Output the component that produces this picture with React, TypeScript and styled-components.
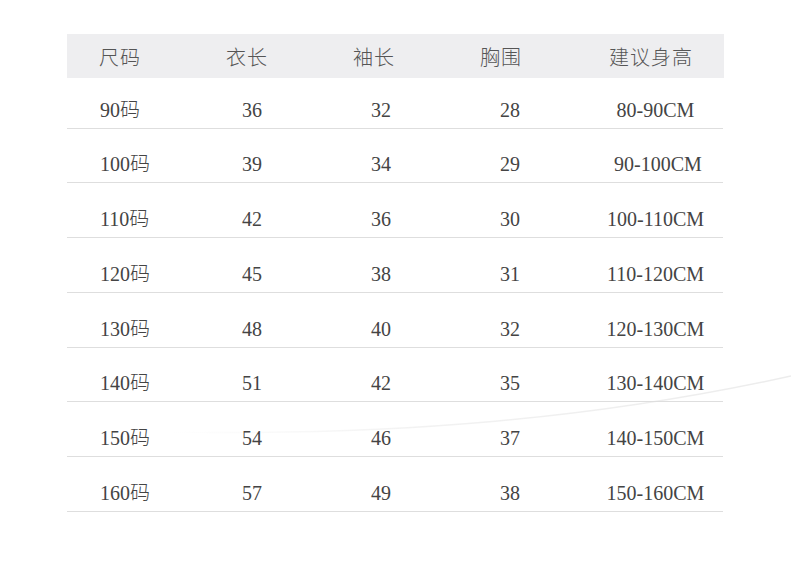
import styled, { createGlobalStyle } from "styled-components";

const GlobalStyle = createGlobalStyle`
  html, body {
    margin: 0;
    padding: 0;
    background: #ffffff;
  }
  body {
    font-family: "Liberation Serif", "Noto Sans CJK SC", serif;
    color: #444;
  }
`

const Page = styled.div`
  position: relative;
  width: 791px;
  height: 572px;
  overflow: hidden;
  padding: 34px 0 0 67px;
  box-sizing: border-box;
`

const Swoosh = styled.svg`
  position: absolute;
  left: 0;
  top: 0;
  pointer-events: none;
`

const Table = styled.div`
  position: relative;
  width: 657px;
`

const cols = "116px 128px 126px 128px 159px";

const HeadRow = styled.div`
  display: grid;
  grid-template-columns: ${cols};
  height: 44px;
  align-items: center;
  background: #eeeef0;
`

const HeadCell = styled.div<{ left?: boolean; shift?: number }>`
  font-family: "Noto Sans CJK SC", sans-serif;
  font-weight: 300;
  font-size: 20px;
  line-height: 22px;
  color: #555;
  text-align: ${p => (p.left ? "left" : "center")};
  padding-left: ${p => p.shift ?? 0}px;
  padding-top: 1px;
  letter-spacing: 1px;
`

const Row = styled.div<{ h: number }>`
  display: grid;
  grid-template-columns: ${cols};
  height: ${p => p.h}px;
  box-sizing: border-box;
  align-items: end;
  padding-bottom: 7px;
  border-bottom: 1px solid #dedede;
  width: 656px;
`

const Cell = styled.div<{ left?: boolean; shift?: number }>`
  font-size: 20px;
  line-height: 22px;
  color: #444;
  white-space: pre;
  text-align: ${p => (p.left ? "left" : "center")};
  padding-left: ${p => p.shift ?? 0}px;
`

const Size = styled.span`
  font-family: "Noto Sans CJK SC", sans-serif;
  font-weight: 300;
`

const heads = ["尺码", "衣长", "袖长", "胸围", "建议身高"];

const rows = [
  ["90", "36", "32", "28", "80-90CM"],
  ["100", "39", "34", "29", " 90-100CM"],
  ["110", "42", "36", "30", "100-110CM"],
  ["120", "45", "38", "31", "110-120CM"],
  ["130", "48", "40", "32", "120-130CM"],
  ["140", "51", "42", "35", "130-140CM"],
  ["150", "54", "46", "37", "140-150CM"],
  ["160", "57", "49", "38", "150-160CM"],
];

const rowHeights = [51, 54, 55, 55, 55, 54, 55, 55];
const headShift = [32, 0, 0, 0, 13];
const cellShift = [33, 10, 14, 18, 22];

export default function App() {
  return (
    <Page>
      <GlobalStyle />
      <Swoosh width="791" height="572" viewBox="0 0 791 572">
        <defs>
          <linearGradient id="sw" x1="0" y1="0" x2="1" y2="0">
            <stop offset="0" stopColor="#f2f2f2" stopOpacity="0" />
            <stop offset="0.4" stopColor="#f2f2f2" stopOpacity="1" />
            <stop offset="1" stopColor="#ececec" stopOpacity="1" />
          </linearGradient>
        </defs>
        <path
          d="M 170 432 C 400 436, 600 418, 791 376"
          fill="none"
          stroke="url(#sw)"
          strokeWidth="1.5"
        />
      </Swoosh>
      <Table>
        <HeadRow>
          {heads.map((h, i) => (
            <HeadCell key={h} left={i === 0} shift={headShift[i]}>
              {h}
            </HeadCell>
          ))}
        </HeadRow>
        {rows.map((r, ri) => (
          <Row key={r[0]} h={rowHeights[ri]}>
            {r.map((c, ci) => (
              <Cell key={ci} left={ci === 0} shift={cellShift[ci]}>
                {c}
                {ci === 0 && <Size>码</Size>}
              </Cell>
            ))}
          </Row>
        ))}
      </Table>
    </Page>
  );
}
